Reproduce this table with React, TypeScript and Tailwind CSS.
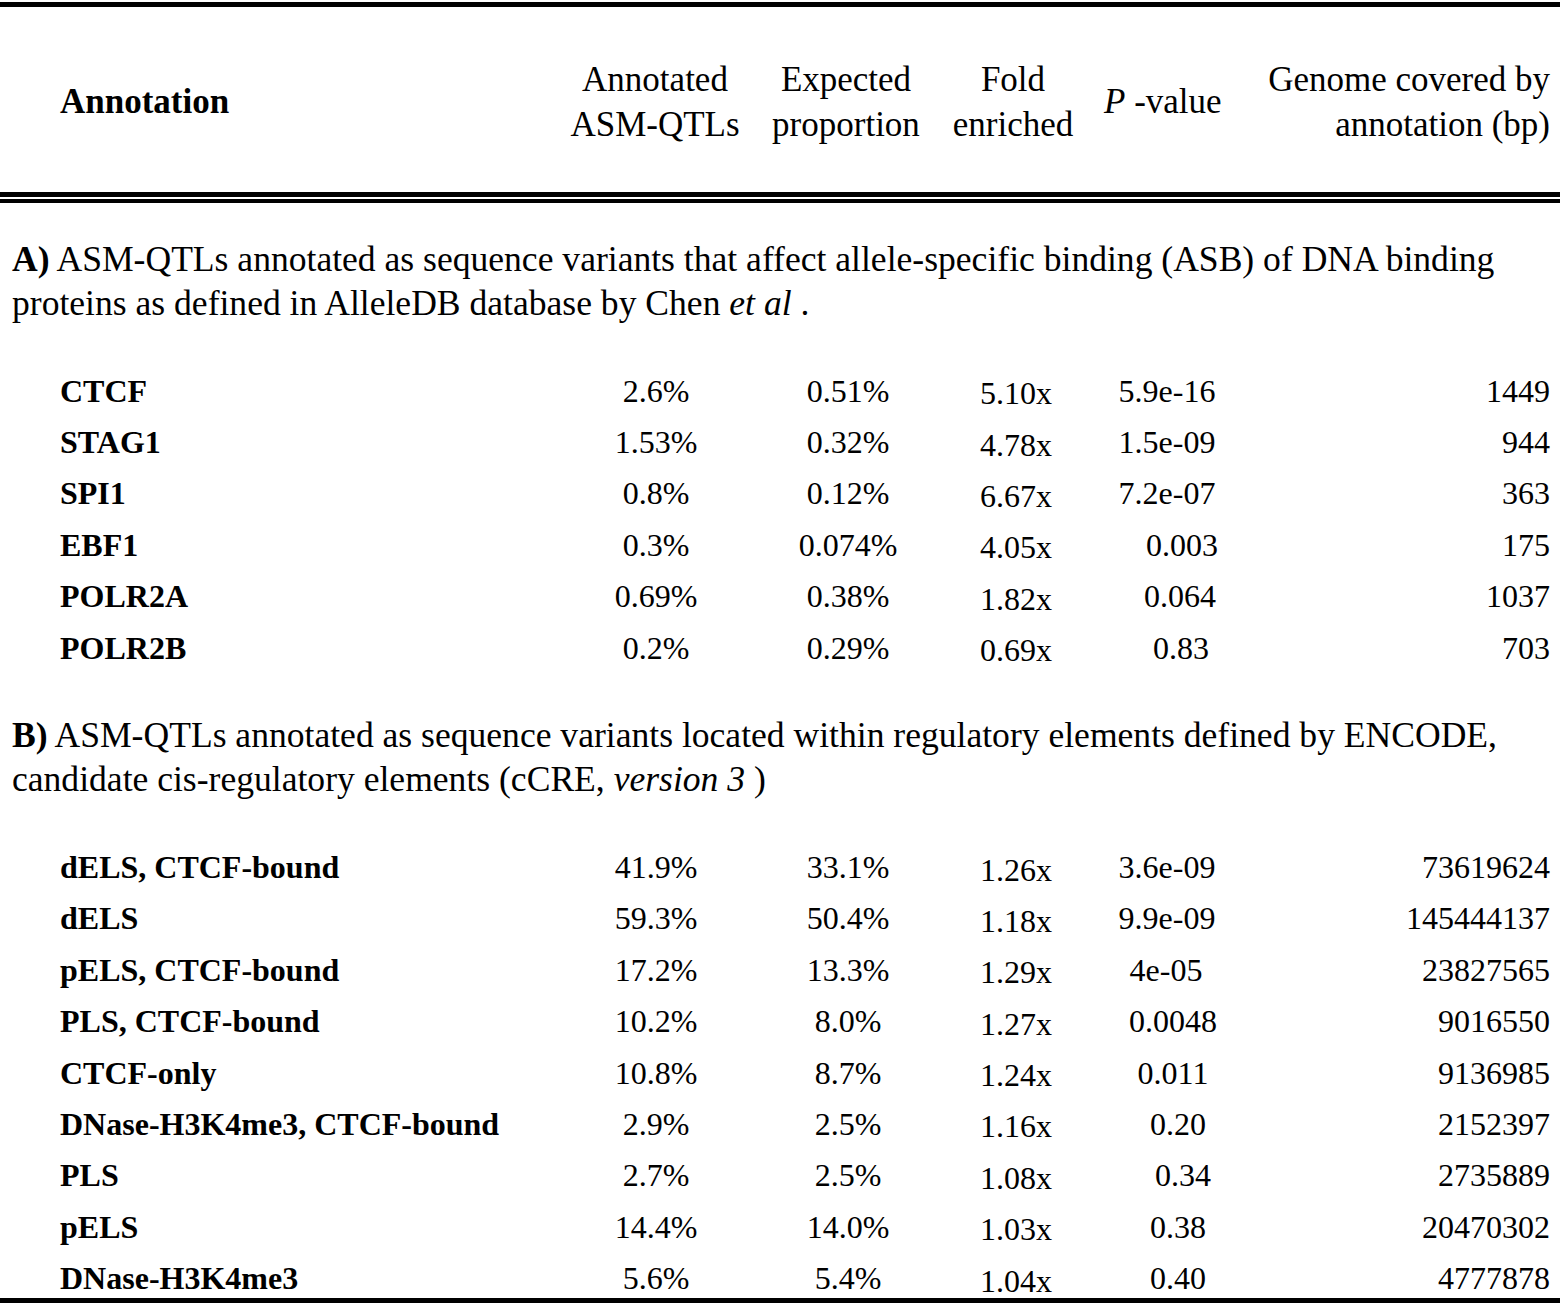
const COLS = 'grid grid-cols-[560px_190px_192px_142px_176px_1fr] items-center';

type Row = {
  name: string;
  annotated: string;
  expected: string;
  fold: string;
  p: string;
  pShift: string;
  genome: string;
};

const ROWS_A: Row[] = [
  {name: 'CTCF', annotated: '2.6%', expected: '0.51%', fold: '5.10x', p: '5.9e-16', pShift: 'pr-[10px]', genome: '1449'},
  {name: 'STAG1', annotated: '1.53%', expected: '0.32%', fold: '4.78x', p: '1.5e-09', pShift: 'pr-[10px]', genome: '944'},
  {name: 'SPI1', annotated: '0.8%', expected: '0.12%', fold: '6.67x', p: '7.2e-07', pShift: 'pr-[10px]', genome: '363'},
  {name: 'EBF1', annotated: '0.3%', expected: '0.074%', fold: '4.05x', p: '0.003', pShift: 'pl-[20px]', genome: '175'},
  {name: 'POLR2A', annotated: '0.69%', expected: '0.38%', fold: '1.82x', p: '0.064', pShift: 'pl-[16px]', genome: '1037'},
  {name: 'POLR2B', annotated: '0.2%', expected: '0.29%', fold: '0.69x', p: '0.83', pShift: 'pl-[18px]', genome: '703'},
];

const ROWS_B: Row[] = [
  {name: 'dELS, CTCF-bound', annotated: '41.9%', expected: '33.1%', fold: '1.26x', p: '3.6e-09', pShift: 'pr-[10px]', genome: '73619624'},
  {name: 'dELS', annotated: '59.3%', expected: '50.4%', fold: '1.18x', p: '9.9e-09', pShift: 'pr-[10px]', genome: '145444137'},
  {name: 'pELS, CTCF-bound', annotated: '17.2%', expected: '13.3%', fold: '1.29x', p: '4e-05', pShift: 'pr-[12px]', genome: '23827565'},
  {name: 'PLS, CTCF-bound', annotated: '10.2%', expected: '8.0%', fold: '1.27x', p: '0.0048', pShift: 'pl-[2px]', genome: '9016550'},
  {name: 'CTCF-only', annotated: '10.8%', expected: '8.7%', fold: '1.24x', p: '0.011', pShift: 'pl-[2px]', genome: '9136985'},
  {name: 'DNase-H3K4me3, CTCF-bound', annotated: '2.9%', expected: '2.5%', fold: '1.16x', p: '0.20', pShift: 'pl-[12px]', genome: '2152397'},
  {name: 'PLS', annotated: '2.7%', expected: '2.5%', fold: '1.08x', p: '0.34', pShift: 'pl-[22px]', genome: '2735889'},
  {name: 'pELS', annotated: '14.4%', expected: '14.0%', fold: '1.03x', p: '0.38', pShift: 'pl-[12px]', genome: '20470302'},
  {name: 'DNase-H3K4me3', annotated: '5.6%', expected: '5.4%', fold: '1.04x', p: '0.40', pShift: 'pl-[12px]', genome: '4777878'},
];

function DataRow({row}: {row: Row}) {
  return (
    <div className={`${COLS} h-[51.4px]`}>
      <div className="pl-[60px] font-bold">{row.name}</div>
      <div className="text-center pl-[2px]">{row.annotated}</div>
      <div className="text-center pl-[4px]">{row.expected}</div>
      <div className="text-center pl-[6px] pt-[5px]">{row.fold}</div>
      <div className={`text-center ${row.pShift}`}>{row.p}</div>
      <div className="text-right pr-[10px]">{row.genome}</div>
    </div>
  );
}

export default function App() {
  return (
    <div className="bg-white w-[1563px] h-[1308px] font-['Liberation_Serif',serif] text-black text-[32px] leading-[44px]">
      <div className="w-[1560px] pt-[2px]">
        <div className="h-[5px] bg-black" />

        <div className={`${COLS} h-[185px] text-[35px] leading-[45px] pt-[4px]`}>
          <div className="pl-[60px] font-bold">Annotation</div>
          <div className="text-center">Annotated<br />ASM-QTLs</div>
          <div className="text-center">Expected<br />proportion</div>
          <div className="text-center">Fold<br />enriched</div>
          <div className="pl-[20px]"><i>P</i> -value</div>
          <div className="text-right pr-[10px]">Genome covered by<br />annotation (bp)</div>
        </div>

        <div className="h-[5px] bg-black" />
        <div className="h-[2px]" />
        <div className="h-[4px] bg-black" />

        <p className="pl-[12px] pt-[34px] text-[35.6px]">
          <b>A)</b> ASM-QTLs annotated as sequence variants that affect allele-specific binding (ASB) of DNA binding
          <br />
          proteins as defined in AlleleDB database by Chen <i>et al</i>&nbsp;.
        </p>
        <div className="pt-[40px]">
          {ROWS_A.map(row => <DataRow key={row.name} row={row} />)}
        </div>

        <p className="pl-[12px] pt-[40px] text-[35.6px]">
          <b>B)</b> ASM-QTLs annotated as sequence variants located within regulatory elements defined by ENCODE,
          <br />
          candidate cis-regulatory elements (cCRE, <i>version 3</i> )
        </p>
        <div className="pt-[40px]">
          {ROWS_B.map(row => <DataRow key={row.name} row={row} />)}
        </div>

        <div className="h-[5px] bg-black -mt-[6px]" />
      </div>
    </div>
  );
}
